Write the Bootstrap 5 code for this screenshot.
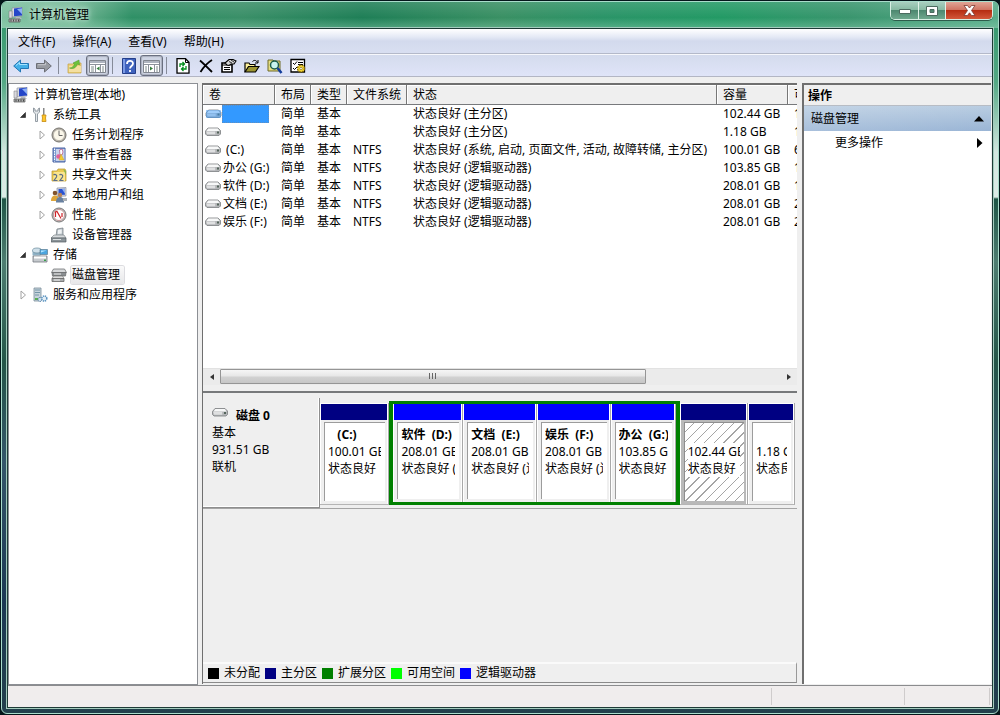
<!DOCTYPE html>
<html lang="zh-CN">
<head>
<meta charset="utf-8">
<meta name="viewport" content="width=device-width, initial-scale=1">
<title>计算机管理</title>
<link href="https://cdn.jsdelivr.net/npm/bootstrap@5.3.0/dist/css/bootstrap.min.css" rel="stylesheet">
<style>
  body { font: 12px/18px "Noto Sans", "Noto Sans CJK SC", sans-serif; color: #000; background: #04161a; padding: 1px; overflow: hidden; }
  button { font: inherit; color: inherit; }
  svg { display: block; flex: none; }
  .frame { border: 1px solid #a9dccb; border-radius: 6px;
    background: linear-gradient(#2f9468 0, #53a884 80px, #d2e6df 150px, #dcebe6 195px, #1f5546 197px, #4e7d71 260px, #245548 360px, #34566a 460px, #1c3854 600px, #22404c 100%); }
  .titlebar { height: 26px; padding: 0 5px 0 6px; gap: 5px; border-radius: 5px 5px 0 0; line-height: 26px;
    background: linear-gradient(rgba(255,255,255,.12), rgba(255,255,255,0) 60%, rgba(160,220,190,.35)), linear-gradient(90deg, #7ec0a0 0, #74b795 70px, #2f9066 130px, #3a8f68 240px, #1f7f57 360px, #3a9064 500px, #2b9468 600px, #239a65 720px, #3a956e 85%, #58ac8a 100%); }
  .titletext { text-shadow: 0 0 8px #cfeee0, 0 0 4px #cfeee0; }
  .winbtns { border: 1px solid #d7efe4; border-top: 0; border-radius: 0 0 5px 5px; height: 18px; overflow: hidden; box-shadow: 0 1px 0 #2d5c4b; }
  .winbtns button { border: 0; border-right: 1px solid #e2f3ea; padding: 0; width: 28px; height: 17px; display: flex; justify-content: center; align-items: center;
    background: linear-gradient(#a9cfbf, #86b9a2 48%, #4d8870 50%, #6fa88e); }
  .winbtns .max { width: 27px; }
  .winbtns .close { width: 46px; border-right: 0; background: linear-gradient(#e0a596, #cf7260 48%, #b62d12 50%, #d3583a); }
  .client { margin: 0 5px 5px; border: 1px solid #1d3b36; box-shadow: 0 0 0 1px #a3cbbd; background: #efefef; }
  .menubar { height: 25px; padding-left: 2px; gap: 1px; border-bottom: 1px solid #b4b9c9; background: linear-gradient(#fff, #e4e9f5 8px, #d3daed 12px, #d9dff1); }
  .menubar button { border: 0; background: none; padding: 2px 8px 0; }
  .tools { height: 23px; padding-left: 1px; border-top: 1px solid #f7f8fc; border-bottom: 1px solid #b3b6c4; background: linear-gradient(#d4dbed, #dfe4f8); }
  .tools button { width: 23px; height: 21px; padding: 0; border: 0; background: none; display: flex; justify-content: center; align-items: center; }
  .tools button.pressed { border: 1px solid #6a7080; border-radius: 3px; background: #cfd5e4; box-shadow: inset 0 0 1px 1px #a9afbd; }
  .divide { width: 1px; height: 17px; margin: 0 4px 0 3px; background: #868b99; }
  .work { padding-top: 6px; gap: 4px; min-height: 0; }
  .treepane { width: 190px; flex: none; background: #fff; border: 1px solid #8c8f94; padding-top: 1px; }
  .treepane ul { list-style: none; margin: 0; padding: 0; }
  .treepane ul ul { padding-left: 8px; }
  .treepane ul ul ul { padding-left: 19px; }
  .item { display: flex; align-items: center; height: 20px; gap: 5px; }
  .root { padding-left: 4px; }
  .item .twist { width: 12px; height: 12px; margin-right: -2px; border: 0; padding: 0; background: none; display: flex; align-items: center; justify-content: center; }
  .chosen { background: linear-gradient(#fafafa, #e7e7e9); box-shadow: 0 0 0 1px #dcdce0; border-radius: 2px; margin: 0 -1px; padding: 0 4px 0 1px; }
  .midpane { min-width: 0; border-left: 1px solid #6f6f6f; border-top: 2px solid #6f6f6f; margin: 0 1px 1px 0; }
  .upper { flex: 306 1 0; min-height: 0; border-bottom: 2px solid #77797b; padding-bottom: 6px; }
  .sheet { background: #fff; min-height: 0; overflow: hidden; }
  .vols { table-layout: fixed; width: 100%; margin: 0; border-collapse: separate; border-spacing: 0; }
  .vols th { height: 20px; line-height: 18px; font-weight: 400; background: #efefef; border-bottom: 1px solid #77797c; border-right: 1px solid #777; box-shadow: inset 1px 1px #fff; padding: 1px 0 0 6px; overflow: hidden; white-space: nowrap; }
  .vols th:last-child { border-right: 0; }
  .vols td { height: 18px; line-height: 18px; padding: 0 0 0 6px; overflow: hidden; white-space: nowrap; }
  .vols td:first-child { padding-left: 2px; }
  .vname { display: flex; align-items: center; white-space: pre; gap: 2px; }
  .picked { width: 47px; height: 18px; margin-left: -2px; background: #3399ff; border: 1px dotted #5f8fc0; }
  .hbar { height: 17px; background: #ebebeb; border-top: 1px solid #e2e2e2; }
  .hbar .end { width: 17px; border: 0; padding: 0; background: none; display: flex; align-items: center; justify-content: center; }
  .thumb { width: 76%; height: 15px; border: 1px solid #959595; border-radius: 1px; background: linear-gradient(#f6f6f6, #e6e6e6 48%, #d2d2d2 52%, #c6c6c6); }
  .lower { flex: 292 1 0; min-height: 0; padding-top: 5px; }
  .diskrow { height: 111px; border-bottom: 1px solid #a5a5a5; }
  .disklabel { width: 117px; flex: none; padding: 9px 0 0 9px; line-height: 17px; border-right: 1px solid #8e8e8e; border-bottom: 1px solid #8e8e8e; box-shadow: inset -1px -1px #fff; }
  .parts { padding: 5px 2px 3px 0; min-width: 0; }
  .extended { border: 3px solid #008000; border-width: 3px 4px 3px; margin: -2px 0 0 0; min-width: 0; }
  .part { min-width: 0; padding: 1px 1px 0; border-right: 1px solid #a9a9a9; border-bottom: 1px solid #b5b5b5; background: #fff; line-height: 17px; display: flex; flex-direction: column; }
  .part .strip { height: 16px; flex: none; background: #000082; }
  .extended .part { border-bottom: 0; padding-top: 0; }
  .extended .strip { background: #00f; }
  .part .shell { flex: 1; background: #efefef; padding: 2px 2px 3px 3px; min-height: 0; }
  .part .well { height: 100%; background: #fff; border-left: 1px solid #9c9c9c; border-top: 1px solid #9c9c9c; padding: 3px 4px 0 3px; }
  .part .well div { white-space: pre; overflow: hidden; height: 17px; }
  .hatched .shell { background: #b9b9b9; }
  .hatched .well { background: repeating-linear-gradient(135deg, #fff 0 6px, #a5a5a5 6px 7px); border-color: #8f8f8f; }
  .hatched .well div + div { background: #fff; }
  .legend { height: 21px; margin-bottom: 1px; border-top: 2px solid #fafafa; border-right: 1px solid #999; border-bottom: 1px solid #8a8a8a; padding-left: 5px; gap: 5px; }
  .legend i { width: 11px; height: 11px; display: block; margin-right: 5px; }
  .actions { width: 189px; flex: none; background: #fff; border-left: 2px solid #6f6f6f; border-top: 2px solid #6f6f6f; margin: 0 1px 1px 0; }
  .acthead { height: 21px; line-height: 21px; padding-left: 4px; background: #efefef; border-bottom: 1px solid #b7bcc4; font-weight: 700; font-size: 12px; margin: 0; }
  .actgroup { height: 25px; padding: 0 7px; border: 0; background: linear-gradient(90deg, rgba(255,255,255,.15), rgba(255,255,255,0)), linear-gradient(#b9cde2, #9ab5d5); }
  .actitem { height: 24px; padding: 0 8px 0 31px; border: 0; background: none; }
  .status { height: 22px; background: #f0eded; border-top: 1px solid #8b8c8e; padding: 2px 0; }
  .status span { border-right: 1px solid #cfcccc; }
</style>
</head>
<body class="vh-100">
<svg width="0" height="0" class="position-absolute" aria-hidden="true">
  <symbol id="pc" viewBox="0 0 16 16"><path d="M4 1l10-1v9l-10 1z" fill="#d7d9de" stroke="#888c99" stroke-width=".6"/><path d="M6 1.500l8-1v8l-8 .8z" fill="#2546c8"/><path d="M9 2l5-.8v6z" fill="#8eb0f4"/><path d="M1 4h3v7H1z" fill="#d8d8de" stroke="#777" stroke-width=".5"/><path d="M8 10h4l2 2H7z" fill="#b6b8bf"/><path d="M1 12h11v3H1z" fill="#aeb0b0" stroke="#555" stroke-width=".7"/><path d="M3 12.500v2M5.500 12.500v2M8 12.500v2M10.500 12.500v2" stroke="#494949"/></symbol>
  <symbol id="drive" viewBox="0 0 16 10"><path d="M3 1h10l2.500 2.500v3.500l-1.500 1.500H2L.5 7V4z" fill="#b4b6b8" stroke="#7c7f82" stroke-width=".8"/><path d="M3.300 1.500h9.500L14.500 4H1.500z" fill="#f7f8f8"/><path d="M1.200 4.500h9v2.800h-8z" fill="#dfe0e1"/><path d="M12 4.500h2v2h-2z" fill="#54645b"/></symbol>
  <symbol id="tools" viewBox="0 0 16 16"><path d="M1.500 1v4l2 2v7.500h2V7l2-2V1L6 2v2H3V2z" fill="#e3e7ea" stroke="#7c868f" stroke-width=".8"/><path d="M11 1v7h1.500V1z" fill="#888"/><path d="M10 8h4l-.5 3 .5 3.500h-4l.5-3.500z" fill="#ffc62a" stroke="#c48a10" stroke-width=".8"/></symbol>
  <symbol id="clock" viewBox="0 0 16 16"><circle cx="8" cy="8" r="7" fill="#b9b5ad" stroke="#75726c"/><circle cx="8" cy="8" r="5.600" fill="#fbf7ea" stroke="#aaa59b" stroke-width=".6"/><path d="M8 3.500v5h3.500" fill="none" stroke="#666" stroke-width="1"/></symbol>
  <symbol id="events" viewBox="0 0 16 16"><path d="M2 1h12v14H2z" fill="#7e9bd0" stroke="#4a64a4"/><path d="M5 2h8.500v12H5z" fill="#c8d3ee"/><path d="M3.500 1.500v13" stroke="#fff" stroke-dasharray="1.500 1"/><path d="M8.500 3L11 2l1 3-1 3H9z" fill="#fff" stroke="#b04a7a" stroke-width=".7"/><circle cx="7.500" cy="9.500" r="2.300" fill="#e2609a"/><path d="M10 7l3 6H8z" fill="#f3cc31" stroke="#c49a1c" stroke-width=".4"/></symbol>
  <symbol id="share" viewBox="0 0 16 16"><path d="M1 4h5l1-2h7l1 2v10H1z" fill="#eccb52" stroke="#b8942a" stroke-width=".7"/><path d="M3 5h11v9H2z" fill="#fae58e"/><path d="M2.500 8c1.500-1.500 4 0 3 2l-2.500 3.500h3.500M8.500 8c1.500-1.500 4 0 3 2L9 13.500h3.500" fill="none" stroke="#5b6d86" stroke-width="1.200"/><path d="M12 2l3 2v4z" fill="#8db84d"/></symbol>
  <symbol id="users" viewBox="0 0 16 16"><path d="M6 1l9-.5v8.500l-9 .5z" fill="#d9dbe0" stroke="#7a7f90" stroke-width=".6"/><path d="M7.500 2l6.500-.3v6l-6.500.3z" fill="#2b53d1"/><path d="M11 2l3-.3v5z" fill="#8fb0f0"/><circle cx="4" cy="6" r="2.300" fill="#82542c"/><circle cx="9" cy="8" r="2.200" fill="#b8855a"/><path d="M0 14c0-4 2-5.500 4-5.500S8 10 8 14z" fill="#dfa63a"/><path d="M5 15.500c0-4 1.800-5.500 4-5.500s4 1.500 4 5.500z" fill="#68809f"/><path d="M12 11h4v3h-4z" fill="#abb0b5"/></symbol>
  <symbol id="perf" viewBox="0 0 16 16"><circle cx="8" cy="8" r="7" fill="#c9c5c5" stroke="#777"/><circle cx="8" cy="8" r="5.500" fill="#fff" stroke="#a05050" stroke-width=".5"/><path d="M4.500 10V5l1.500-.5 4 7M11 10V6" fill="none" stroke="#cf2228" stroke-width="1.200"/></symbol>
  <symbol id="device" viewBox="0 0 16 16"><path d="M6 2l6-1v8H5z" fill="#bdc5cb" stroke="#6e777d" stroke-width=".7"/><path d="M7 3l3.700-.5v4L7 7z" fill="#eff2f4"/><path d="M3 8h10l2 3H0z" fill="#d7dbdd" stroke="#747c81" stroke-width=".6"/><path d="M0 11h15v4H0z" fill="#8b9499" stroke="#555d62" stroke-width=".7"/><path d="M2 12.500h8" stroke="#dde1e3"/></symbol>
  <symbol id="storage" viewBox="0 0 16 16"><path d="M.5 3.500v5h8v-5z" fill="#8fb2c6"/><ellipse cx="5" cy="3.500" rx="4.500" ry="2.500" fill="#cfe0ea" stroke="#68899b" stroke-width=".7"/><path d="M8 2.500h7.500v5H8z" fill="#4ba5df" stroke="#5c7e93" stroke-width=".7"/><path d="M9 3.500h5.500l-5.500 2z" fill="#b4e5ff"/><path d="M1 9h14v6H1z" fill="#c6cace" stroke="#737a80" stroke-width=".8"/><path d="M2 9.500h12v2H2z" fill="#fff"/><path d="M12 12.500h2v1.500h-2z" fill="#38a24a"/></symbol>
  <symbol id="diskmg" viewBox="0 0 16 16"><path d="M2.500 2h11l2 3.500H.5z" fill="#d7d9db" stroke="#6e7173" stroke-width=".8"/><path d="M1 5.500h14l-.5 3.500H1.500z" fill="#8b8f92" stroke="#676a6c" stroke-width=".7"/><path d="M2.500 9h9l1.500 2.500H1z" fill="#ddd" stroke="#666" stroke-width=".6"/><path d="M1 11.500h12v3H1z" fill="#aaadaf" stroke="#666" stroke-width=".8"/><path d="M3 7h7M3 13h6" stroke="#efefef"/></symbol>
  <symbol id="services" viewBox="0 0 16 16"><path d="M2 1h7v13H2z" fill="#c7d3db" stroke="#7a8e9a" stroke-width=".8"/><path d="M3 3h5M3 5.500h5M3 8h4" stroke="#7496a8"/><path d="M3 11h3v2H3z" fill="#57b04f"/><circle cx="8" cy="12.500" r="2" fill="#cfe0ec" stroke="#547fa4" stroke-dasharray="1.200 .6"/><circle cx="12.300" cy="11.500" r="2.500" fill="#e3eef6" stroke="#5b93c0" stroke-width="1.500" stroke-dasharray="1.300 .7"/></symbol>
  <symbol id="open" viewBox="0 0 12 12"><path d="M8.500 3.500v5h-5z" fill="#333" stroke="#222" stroke-width=".6"/></symbol>
  <symbol id="shut" viewBox="0 0 12 12"><path d="M4 2l4.500 4L4 10z" fill="#fff" stroke="#a2a2a2"/></symbol>
</svg>

<div class="frame h-100 d-flex flex-column">
  <header class="titlebar d-flex align-items-center">
    <svg width="16" height="16"><use href="#pc"/></svg>
    <span class="titletext">计算机管理</span>
    <div class="winbtns d-flex ms-auto align-self-start">
      <button type="button" aria-label="最小化"><svg width="12" height="6"><path d="M.5 1.500h11v4H.5z" fill="#fff" stroke="#4d6b60"/></svg></button>
      <button type="button" class="max" aria-label="最大化"><svg width="12" height="10"><path d="M.5 .5h11v9H.5zM4 3.500v3h4v-3z" fill="#fff" fill-rule="evenodd" stroke="#4d6b60"/></svg></button>
      <button type="button" class="close" aria-label="关闭"><svg width="13" height="11"><path d="M1 .5h3.500l2 2.500 2-2.500H12L8.500 5.500l3.500 5H8.500l-2-2.700-2 2.700H1l3.500-5z" fill="#fff" stroke="#7c3a30" stroke-width=".8"/></svg></button>
    </div>
  </header>

  <div class="client flex-grow-1 d-flex flex-column">
    <nav class="menubar d-flex align-items-center">
      <button type="button">文件(F)</button><button type="button">操作(A)</button><button type="button">查看(V)</button><button type="button">帮助(H)</button>
    </nav>
    <div class="tools d-flex align-items-center" role="toolbar">
      <button type="button" aria-label="后退"><svg width="16" height="14"><path d="M.7 7L7.500 1v3.500h8v5h-8V13z" fill="#45b0e8" stroke="#2377b5"/><path d="M3 6.500l3.500-3v2H14" fill="none" stroke="#a4e3ff"/></svg></button>
      <button type="button" aria-label="前进"><svg width="16" height="14"><path d="M15.300 7L8.500 1v3.500h-8v5h8V13z" fill="#989ba1" stroke="#6c6f76"/><path d="M2 5.700h7.500V4" fill="none" stroke="#c7c9cd"/></svg></button>
      <span class="divide"></span>
      <button type="button" aria-label="上移"><svg width="16" height="16"><path d="M1 6h5l1-1h7v10H1z" fill="#ecd37b" stroke="#c29f43" stroke-width=".7"/><path d="M2 8h12v6H2z" fill="#f4dfa0"/><path d="M2.500 10c2.500 0 4-1.500 5-4L6 5l6-3 .5 5-2-1C9 10 6 11.500 2.500 10z" fill="#6cc33c" stroke="#4a9425" stroke-width=".5"/></svg></button>
      <button type="button" class="pressed" aria-label="显示控制台树"><svg width="17" height="14"><path d="M.5 1.500h16v12H.5z" fill="#fff" stroke="#81868f"/><path d="M1 2h15v2H1z" fill="#aeb4bf"/><path d="M1 5.500h15M6.500 6v7M11.500 6v7" stroke="#8c929b"/><path d="M2 8h3M2 10h3M2 12h3M13 8h2M13 10h2M13 12h2" stroke="#7d8b8b"/><path d="M10.500 7.500v4l-3-2z" fill="#347f3c"/></svg></button>
      <span class="divide"></span>
      <button type="button" aria-label="帮助"><svg width="14" height="16"><path d="M.5 .5h13v15H.5z" fill="#3f62bd" stroke="#243f8a"/><path d="M1 1h2v14H1z" fill="#7b9ae4"/><path d="M5 6c0-4 6-4 6-.5C11 8 8 8 8 10.500M8 12v2" fill="none" stroke="#fff" stroke-width="1.800"/></svg></button>
      <button type="button" class="pressed" aria-label="显示操作窗格"><svg width="17" height="14"><path d="M.5 1.500h16v12H.5z" fill="#fff" stroke="#81868f"/><path d="M1 2h15v2H1z" fill="#aeb4bf"/><path d="M1 5.500h15M5.500 6v7M11.500 6v7" stroke="#8c929b"/><path d="M2 8h2M2 10h2M2 12h2M13 8h2M13 10h2M13 12h2" stroke="#7d8b8b"/><path d="M7 7.500v4l3-2z" fill="#347f3c"/></svg></button>
      <span class="divide"></span>
      <button type="button" aria-label="刷新"><svg width="14" height="16"><path d="M1 .7h8.500l3.500 3.500v11H1z" fill="#fff" stroke="#000" stroke-width="1.300"/><path d="M9.500 1v3.500H13" fill="none" stroke="#000"/><path d="M4 9V6h4M6.500 4l2 2-2 2M10 8v3H6M7.500 9l-2 2 2 2" fill="none" stroke="#008c1b" stroke-width="1.300"/></svg></button>
      <button type="button" aria-label="删除"><svg width="14" height="14"><path d="M1 1.500C5 5 9 9 13 13M13 1C8 4 4 9 1.500 13" fill="none" stroke="#000" stroke-width="1.800"/></svg></button>
      <button type="button" aria-label="属性"><svg width="16" height="15"><path d="M1 5h10v9H1z" fill="#fff" stroke="#000" stroke-width="1.600"/><path d="M1 7h10M3 9.500h6M3 11.500h6" stroke="#000" stroke-width="1.200"/><path d="M4 5l4-3.500h4l3 1.500-2 3h-3L8 7.500 6 7z" fill="#d9d9d9" stroke="#000" stroke-width="1.100"/><path d="M10 2l3 2M8 3.500l3 1.500" stroke="#000" stroke-width=".8"/></svg></button>
      <button type="button" aria-label="打开"><svg width="16" height="14"><path d="M1 13V4h4l1 1.500h5V8" fill="#fff29a" stroke="#000" stroke-width="1.200"/><path d="M1 13l3.500-5.500H15L11.500 13z" fill="#9c9531" stroke="#000" stroke-width="1.200"/><path d="M8.500 2.500c2-2 4-1 5 1M14 1v3h-3" fill="none" stroke="#000"/></svg></button>
      <button type="button" aria-label="查找"><svg width="16" height="16"><path d="M1 2h5l1 1h6v10H1z" fill="#e7de83" stroke="#6e6a27"/><circle cx="7.500" cy="7" r="4" fill="#c8f4ee" stroke="#1b5d4a" stroke-width="1.500"/><path d="M10.500 10l4 5" stroke="#123c9b" stroke-width="2.500"/></svg></button>
      <button type="button" aria-label="设置"><svg width="16" height="16"><path d="M1 1.500h13.500v12.500H1z" fill="#fff" stroke="#000" stroke-width="1.300"/><path d="M3 5l1.500 1.500L7 3.500M3 10l1.500 1.500L7 9M8 4.500h5M8 6.500h5" fill="none" stroke="#000"/><circle cx="11" cy="10.500" r="3.500" fill="#f8da3a" stroke="#8a6d00" stroke-width="1.400" stroke-dasharray="1.800 1"/><circle cx="11" cy="10.500" r="1.200" fill="#fff" stroke="#745c00" stroke-width=".6"/></svg></button>
    </div>

    <main class="work d-flex flex-grow-1">
      <nav class="treepane" aria-label="控制台树">
        <div class="item root"><svg width="16" height="16"><use href="#pc"/></svg>计算机管理(本地)</div>
        <ul><li><ul>
          <li><div class="item"><button type="button" class="twist" aria-label="折叠"><svg width="12" height="12"><use href="#open"/></svg></button><svg width="16" height="16"><use href="#tools"/></svg>系统工具</div>
            <ul>
              <li class="item"><button type="button" class="twist" aria-label="展开"><svg width="12" height="12"><use href="#shut"/></svg></button><svg width="16" height="16"><use href="#clock"/></svg>任务计划程序</li>
              <li class="item"><button type="button" class="twist" aria-label="展开"><svg width="12" height="12"><use href="#shut"/></svg></button><svg width="16" height="16"><use href="#events"/></svg>事件查看器</li>
              <li class="item"><button type="button" class="twist" aria-label="展开"><svg width="12" height="12"><use href="#shut"/></svg></button><svg width="16" height="16"><use href="#share"/></svg>共享文件夹</li>
              <li class="item"><button type="button" class="twist" aria-label="展开"><svg width="12" height="12"><use href="#shut"/></svg></button><svg width="16" height="16"><use href="#users"/></svg>本地用户和组</li>
              <li class="item"><button type="button" class="twist" aria-label="展开"><svg width="12" height="12"><use href="#shut"/></svg></button><svg width="16" height="16"><use href="#perf"/></svg>性能</li>
              <li class="item"><span class="twist"></span><svg width="16" height="16"><use href="#device"/></svg>设备管理器</li>
            </ul></li>
          <li><div class="item"><button type="button" class="twist" aria-label="折叠"><svg width="12" height="12"><use href="#open"/></svg></button><svg width="16" height="16"><use href="#storage"/></svg>存储</div>
            <ul>
              <li class="item"><span class="twist"></span><svg width="16" height="16"><use href="#diskmg"/></svg><span class="chosen">磁盘管理</span></li>
            </ul></li>
          <li class="item"><button type="button" class="twist" aria-label="展开"><svg width="12" height="12"><use href="#shut"/></svg></button><svg width="16" height="16"><use href="#services"/></svg>服务和应用程序</li>
        </ul></li></ul>
      </nav>

      <section class="midpane flex-grow-1 d-flex flex-column">
        <div class="upper d-flex flex-column">
          <div class="sheet flex-grow-1">
            <table class="vols">
              <colgroup><col style="width:72px"><col style="width:36px"><col style="width:36px"><col style="width:60px"><col><col style="width:71px"><col style="width:9px"></colgroup>
              <thead><tr><th>卷</th><th>布局</th><th>类型</th><th>文件系统</th><th>状态</th><th>容量</th><th>可</th></tr></thead>
              <tbody>
                <tr><td><span class="vname"><svg width="17" height="10"><use href="#drive"/><path d="M1 1h15v8H1z" fill="#3399ff" opacity=".45"/></svg><span class="picked"></span></span></td><td>简单</td><td>基本</td><td></td><td>状态良好 (主分区)</td><td>102.44 GB</td><td>1</td></tr>
                <tr><td><span class="vname"><svg width="16" height="10"><use href="#drive"/></svg></span></td><td>简单</td><td>基本</td><td></td><td>状态良好 (主分区)</td><td>1.18 GB</td><td>1</td></tr>
                <tr><td><span class="vname"><svg width="16" height="10"><use href="#drive"/></svg><span> (C:)</span></span></td><td>简单</td><td>基本</td><td>NTFS</td><td>状态良好 (系统, 启动, 页面文件, 活动, 故障转储, 主分区)</td><td>100.01 GB</td><td>6</td></tr>
                <tr><td><span class="vname"><svg width="16" height="10"><use href="#drive"/></svg><span>办公 (G:)</span></span></td><td>简单</td><td>基本</td><td>NTFS</td><td>状态良好 (逻辑驱动器)</td><td>103.85 GB</td><td>1</td></tr>
                <tr><td><span class="vname"><svg width="16" height="10"><use href="#drive"/></svg><span>软件 (D:)</span></span></td><td>简单</td><td>基本</td><td>NTFS</td><td>状态良好 (逻辑驱动器)</td><td>208.01 GB</td><td>1</td></tr>
                <tr><td><span class="vname"><svg width="16" height="10"><use href="#drive"/></svg><span>文档 (E:)</span></span></td><td>简单</td><td>基本</td><td>NTFS</td><td>状态良好 (逻辑驱动器)</td><td>208.01 GB</td><td>2</td></tr>
                <tr><td><span class="vname"><svg width="16" height="10"><use href="#drive"/></svg><span>娱乐 (F:)</span></span></td><td>简单</td><td>基本</td><td>NTFS</td><td>状态良好 (逻辑驱动器)</td><td>208.01 GB</td><td>2</td></tr>
              </tbody>
            </table>
          </div>
          <div class="hbar d-flex flex-shrink-0">
            <button type="button" class="end" aria-label="向左滚动"><svg width="6" height="8"><path d="M5 1v6L1 4z" fill="#333"/></svg></button>
            <div class="flex-grow-1"><div class="thumb d-flex align-items-center justify-content-center"><svg width="8" height="7"><path d="M.5 0v6M3.500 0v6M6.500 0v6" stroke="#666"/></svg></div></div>
            <button type="button" class="end" aria-label="向右滚动"><svg width="6" height="8"><path d="M1 1v6l4-3z" fill="#333"/></svg></button>
          </div>
        </div>

        <div class="lower d-flex flex-column">
          <div class="diskrow d-flex flex-shrink-0">
            <div class="disklabel">
              <div class="d-flex fw-bold gap-2"><svg width="16" height="11"><use href="#drive"/></svg>磁盘 0</div>
              <div>基本</div><div>931.51 GB</div><div>联机</div>
            </div>
            <div class="parts d-flex flex-grow-1">
              <div class="part" style="flex:68 1 0"><div class="strip"></div><div class="shell"><div class="well"><div class="fw-bold">   (C:)</div><div>100.01 GB</div><div>状态良好</div></div></div></div>
              <div class="extended d-flex" style="flex:289 1 0">
                <div class="part" style="flex:70 1 0"><div class="strip"></div><div class="shell"><div class="well"><div class="fw-bold">软件  (D:)</div><div>208.01 GB</div><div>状态良好 (</div></div></div></div>
                <div class="part" style="flex:74 1 0"><div class="strip"></div><div class="shell"><div class="well"><div class="fw-bold">文档  (E:)</div><div>208.01 GB</div><div>状态良好 (逻</div></div></div></div>
                <div class="part" style="flex:74 1 0"><div class="strip"></div><div class="shell"><div class="well"><div class="fw-bold">娱乐  (F:)</div><div>208.01 GB</div><div>状态良好 (逻</div></div></div></div>
                <div class="part" style="flex:65 1 0"><div class="strip"></div><div class="shell"><div class="well"><div class="fw-bold">办公  (G:)</div><div>103.85 GB</div><div>状态良好</div></div></div></div>
              </div>
              <div class="part hatched" style="flex:67 1 0"><div class="strip"></div><div class="shell"><div class="well"><div></div><div>102.44 GB</div><div>状态良好</div></div></div></div>
              <div class="part" style="flex:45 1 0"><div class="strip"></div><div class="shell"><div class="well"><div></div><div>1.18 GB</div><div>状态良</div></div></div></div>
            </div>
          </div>
          <div class="legend d-flex align-items-center mt-auto">
            <span class="d-flex align-items-center"><i style="background:#000"></i>未分配</span>
            <span class="d-flex align-items-center"><i style="background:#000082"></i>主分区</span>
            <span class="d-flex align-items-center"><i style="background:#008000"></i>扩展分区</span>
            <span class="d-flex align-items-center"><i style="background:#0f0"></i>可用空间</span>
            <span class="d-flex align-items-center"><i style="background:#00f"></i>逻辑驱动器</span>
          </div>
        </div>
      </section>

      <aside class="actions">
        <h2 class="acthead">操作</h2>
        <button type="button" class="actgroup d-flex w-100 align-items-center justify-content-between">磁盘管理<svg width="10" height="6"><path d="M5 0l5 5.500H0z"/></svg></button>
        <button type="button" class="actitem d-flex w-100 align-items-center justify-content-between">更多操作<svg width="6" height="10"><path d="M0 0l5.500 5L0 10z"/></svg></button>
      </aside>
    </main>
    <footer class="status d-flex"><span class="flex-grow-1"></span><span style="width:133px"></span><span style="width:85px"></span><b style="width:2px"></b></footer>
  </div>
</div>
<script src="https://cdn.jsdelivr.net/npm/bootstrap@5.3.0/dist/js/bootstrap.bundle.min.js"></script>
</body>
</html>
